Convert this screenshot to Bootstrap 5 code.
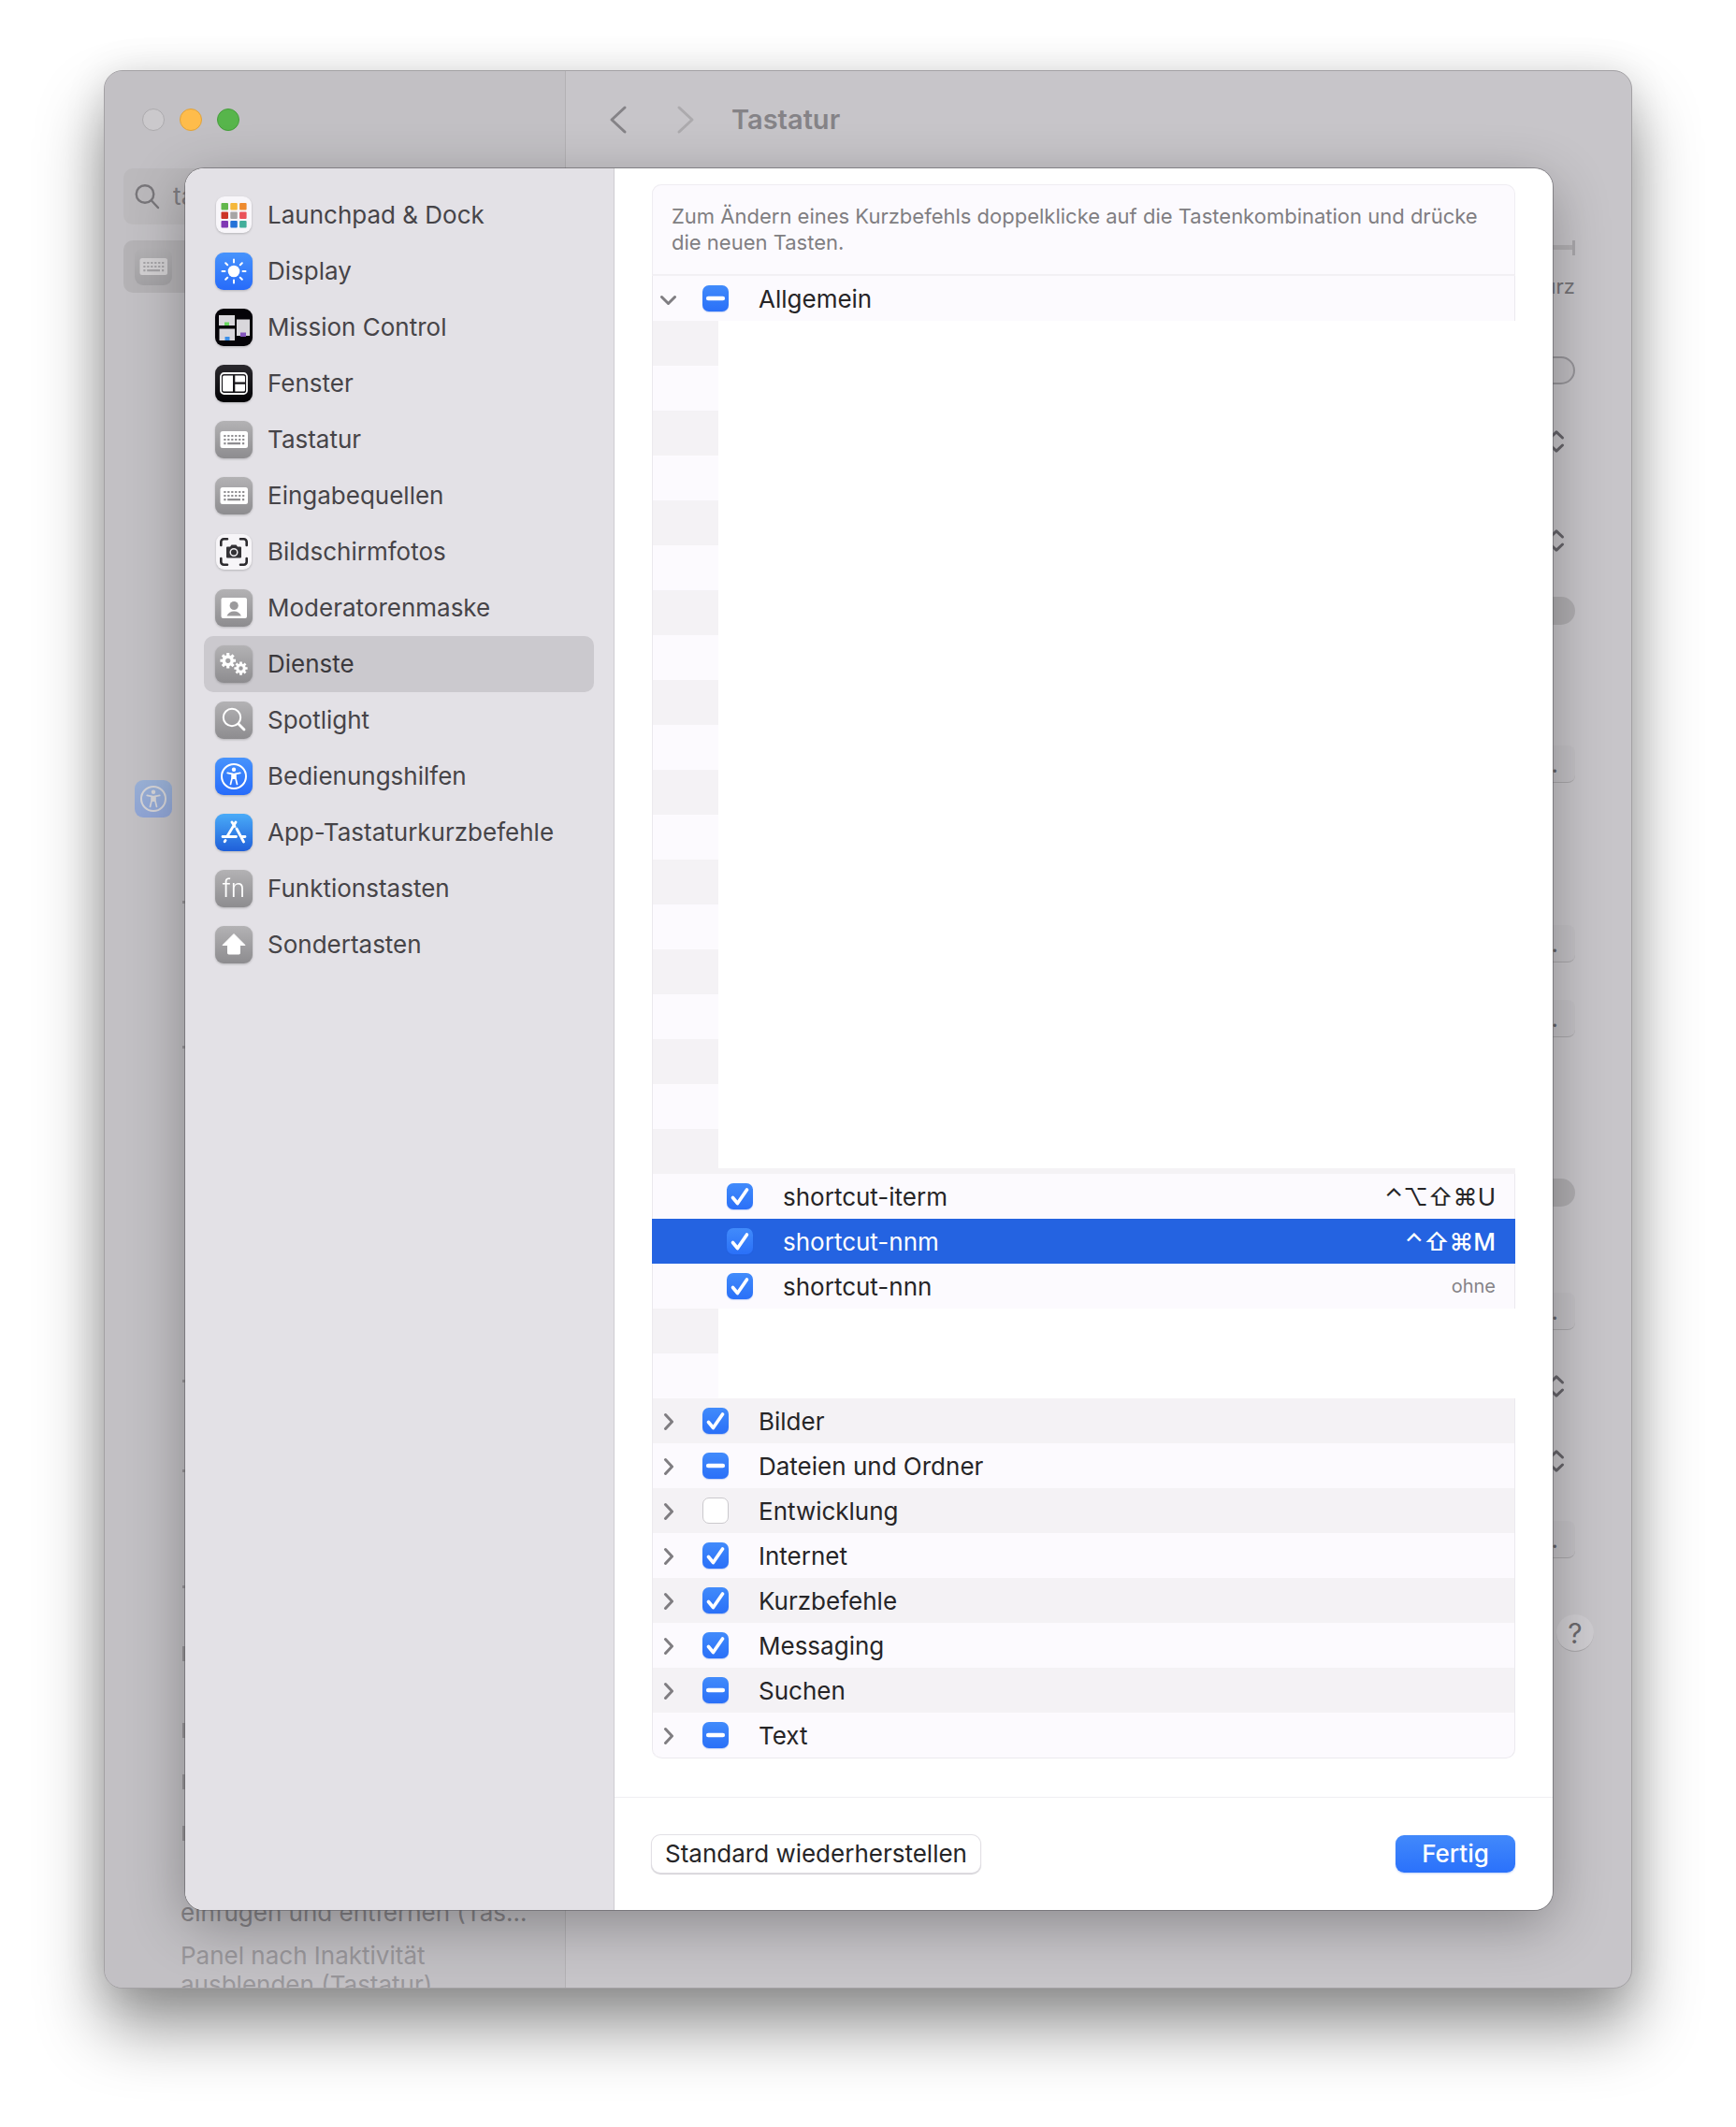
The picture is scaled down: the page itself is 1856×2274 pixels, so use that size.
<!DOCTYPE html>
<html lang="de">
<head>
<meta charset="utf-8">
<meta name="viewport" content="width=device-width, initial-scale=1">
<title>Tastatur – Kurzbefehle</title>
<link href="https://cdn.jsdelivr.net/npm/bootstrap@5.3.0/dist/css/bootstrap.min.css" rel="stylesheet">
<style>
  body { font-family: Inter, "Liberation Sans", sans-serif; font-size: 26px; line-height: 32px; color: #262527; background: #fff; }
  .desk { padding: 75px 111px 147px; }
  .win { display: grid; border-radius: 20px; border: 1px solid #a3a1a4; background: #c7c5c9;
    box-shadow: 0 42px 70px rgba(0,0,0,.42), 0 4px 44px rgba(0,0,0,.12); position: relative; }
  .win-back { position: absolute; inset: 0; overflow: hidden; border-radius: 19px; }
  .win-side { width: 493px; background: #c2c0c4; border-right: 1px solid #b3b1b4; flex: none; }
  .lights { height: 104px; padding-left: 40px; gap: 16px; }
  .light { width: 24px; height: 24px; border-radius: 50%; border: 1px solid #acaaad; background: #cbc9cc; padding: 0; }
  .light-y { background: #febc4b; border-color: #dfa23c; }
  .light-g { background: #57b54b; border-color: #469d3c; }
  .find { margin: 0 20px; height: 60px; padding-left: 12px; gap: 14px; background: #bbb9bc; border-radius: 10px; color: #858387; }
  .find input { border: 0; background: none; color: #7d7b7f; padding: 0; }
  .found { margin: 17px 20px 0; height: 56px; padding-left: 12px; background: #b4b2b5; border-radius: 10px; }
  .found-access { margin: 521px 32px 0; opacity: .32; }
  .edges { margin: 0 0 0 83px; display: grid; align-items: end; grid-template-rows: 92px 155px 357px 96px 124px 78px 82px 55px 55px; }
  .edges i { width: 3px; height: 16px; background: #9a989b; }
  .edges i.thin { height: 3px; }
  .hits { margin: auto 20px -12px 81px; color: #98969a; line-height: 31px; }
  .hits p { margin: 0 0 15px; }
  .hits .near { color: #858387; }
  .bar { height: 104px; padding-left: 45px; }
  .bar button { border: 0; background: none; padding: 0; width: 22px; height: 32px; margin-right: 50px; line-height: 0; }
  .bar button + button { margin-right: 38px; }
  .bar h1 { font-size: 29px; line-height: 36px; font-weight: 600; color: #858387; margin: 0; }
  .behind { display: grid; justify-items: end; align-items: end; padding-right: 60px;
    grid-template-rows: 105px 41px 90px 76px 106px 75px 164px 192px 80px 186px 127px 80px 80px 84px 100px; }
  .behind > * { height: 40px; display: flex; align-items: center; }
  .b-text { font-size: 22px; color: #757377; }
  .b-track { width: 120px; height: 16px; border-right: 3px solid #aaa8ac; background: linear-gradient(transparent 5px, #b2b0b3 5px, #b2b0b3 10px, transparent 10px); }
  .b-switch { width: 52px; height: 30px; border-radius: 15px; background: #b0aeb1; border: 0; }
  .b-switch.open { background: #c0bec2; border: 2px solid #97959a; }
  .b-btn { width: 120px; height: 40px; border-radius: 8px; border: 0; border-bottom: 1px solid #a9a7aa; background: #c3c1c5; color: #656367; padding: 0 18px 0 0; justify-content: flex-end; }
  .b-pick { margin-right: 11px; }
  .b-help { width: 40px; height: 40px; border-radius: 50%; border: 0; border-bottom: 1px solid #acaaad; background: #cfcdd1; color: #6b696d; padding: 0; justify-content: center; margin-right: -20px; font-size: 30px; }

  .sheet { margin: 104px 84px 83px 86px; border-radius: 20px; background: #fff; position: relative; overflow: hidden; }
  .sheet-shade { position: absolute; inset: 104px 84px 83px 86px; border-radius: 20px; box-shadow: 0 0 0 1px rgba(90,88,92,.55), 0 16px 60px rgba(0,0,0,.3); }
  .cats { width: 459px; flex: none; background: #e3e1e6; border-right: 1px solid #cfcdd2; padding: 20px 21px 20px 20px; }
  .cats a { height: 60px; padding: 0 12px; gap: 16px; color: #464448; text-decoration: none; border-radius: 10px; display: flex; align-items: center; }
  .cats a.on { background: #cbc9ce; color: #3b393d; }
  .ico { width: 40px; height: 40px; flex: none; display: block; filter: drop-shadow(0 1px 1px rgba(0,0,0,.2)); }
  .pane { padding-top: 17px; }
  .svcs { margin: 0 40px; border-left: 1px solid #ebe9ee; border-radius: 10px; }
  .hint { margin: 0 0 0 -1px; padding: 19px 20px 20px; border: 1px solid #efedf2; border-bottom: 2px solid #f2f0f4; border-radius: 10px 10px 0 0; background: #fcfafe; font-size: 22px; line-height: 28px; color: #807e82; }
  .svc { height: 48px; padding-left: 8px; padding-right: 20px; background: #fcfafe; border-right: 1px solid #ebe9ee; }
  .svc.alt { background: #f4f2f5; }
  .svc.sub { padding-left: 79px; }
  .svc.sel { background: #2463e1; color: #fff; border-color: #2463e1; margin-left: -1px; padding-left: 80px; }
  .svc.end { border-bottom: 1px solid #ebe9ee; border-radius: 0 0 10px 10px; height: 49px; }
  .svc label { margin-left: 32px; flex: 1; }
  .svc label, .svc span { padding-top: 2px; }
  .tw { width: 18px; height: 20px; margin-right: 27px; border: 0; background: none; padding: 0; line-height: 0; }
  .svc .form-check-input { width: 28px; height: 28px; margin: 0; flex: none; border: 1px solid #cbc9cd; border-radius: 7px; background-color: #fff; }
  .svc .form-check-input:checked, .svc .form-check-input:indeterminate { border: 0; background-color: #3079fa; background-size: 28px 28px; box-shadow: 0 1px 1px rgba(30,90,220,.25); }
  .svc .form-check-input:checked { background-image: url("data:image/svg+xml,%3csvg xmlns='http://www.w3.org/2000/svg' viewBox='0 0 28 28'%3e%3cpath d='M6.500 15.500l5 6L21.500 7' fill='none' stroke='%23fff' stroke-width='3.600' stroke-linecap='round' stroke-linejoin='round'/%3e%3c/svg%3e"), linear-gradient(#418bfb, #2a70f8); }
  .svc .form-check-input:indeterminate { background-image: url("data:image/svg+xml,%3csvg xmlns='http://www.w3.org/2000/svg' viewBox='0 0 28 28'%3e%3cpath d='M6.200 14h15.600' fill='none' stroke='%23fff' stroke-width='4.600' stroke-linecap='round'/%3e%3c/svg%3e"), linear-gradient(#418bfb, #2a70f8); }
  .svc .none { font-size: 20px; color: #858387; padding: 0; }
  .blank { background: #fff; }
  .blank div { width: 70px; background: repeating-linear-gradient(#f4f2f5 0 48px, #fcfafe 48px 96px); }
  .blank-long { height: 906px; }
  .blank-short { height: 96px; }
  .lip { height: 6px; background: #f4f2f5; }
  .foot { margin-top: 41px; border-top: 1px solid #f0eef2; padding: 40px; }
  .foot .btn { height: 40px; font-size: 26px; line-height: 38px; padding: 0 14px; border: 0; border-radius: 9px; }
  .foot .btn-plain { color: #262527; background: #fff; box-shadow: 0 0 0 1px #e2e0e5, 0 1px 1px 1px #d0ced3; }
  .foot .btn-go { color: #fff; background: linear-gradient(#4289fb, #2a71fb); width: 128px; box-shadow: 0 1px 2px rgba(40,100,230,.3); font-weight: 500; }
</style>
<script src="https://cdn.jsdelivr.net/npm/bootstrap@5.3.0/dist/js/bootstrap.bundle.min.js"></script>
</head>
<body>
<svg width="0" height="0" class="position-absolute" aria-hidden="true">
  <defs>
    <linearGradient id="gGrey" x1="0" y1="0" x2="0" y2="1"><stop offset="0" stop-color="#b3b2b4"/><stop offset="1" stop-color="#8d8c8f"/></linearGradient>
    <linearGradient id="gBlue" x1="0" y1="0" x2="0" y2="1"><stop offset="0" stop-color="#4793fc"/><stop offset="1" stop-color="#276bfa"/></linearGradient>
    <linearGradient id="gStore" x1="0" y1="0" x2="0" y2="1"><stop offset="0" stop-color="#4aabf8"/><stop offset="1" stop-color="#1f5fd9"/></linearGradient>
    <linearGradient id="gDark" x1="0" y1="0" x2="0" y2="1"><stop offset="0" stop-color="#2b292e"/><stop offset="1" stop-color="#020104"/></linearGradient>
    <symbol id="keys" viewBox="0 0 40 40">
      <rect width="40" height="40" rx="9" fill="url(#gGrey)"/>
      <rect x="5.500" y="11" width="29.500" height="18" rx="2.500" fill="#fff"/>
      <g stroke="#8f8e91" stroke-width="2.200"><path d="M9.300 16h22" stroke-dasharray="2.200 1.760"/><path d="M9.300 20h22" stroke-dasharray="2.200 1.760"/><path d="M9.300 24.200h2.200M13.200 24.200h13.800M29 24.200h2.200"/></g>
    </symbol>
    <symbol id="access" viewBox="0 0 40 40">
      <rect width="40" height="40" rx="9" fill="url(#gBlue)"/>
      <circle cx="20" cy="20" r="13" fill="none" stroke="#fff" stroke-width="2"/>
      <circle cx="20" cy="12.700" r="2.200" fill="#fff"/>
      <path d="M13.200 16.400l5 .9v4.200l-1.700 7M26.800 16.400l-5 .9v4.200l1.700 7" fill="none" stroke="#fff" stroke-width="1.700" stroke-linecap="round" stroke-linejoin="round"/>
      <path d="M17.600 16.800h4.800v6.200h-4.800z" fill="#fff"/>
    </symbol>
    <symbol id="gear" viewBox="-10 -10 20 20">
      <circle r="5" fill="none" stroke="#fff" stroke-width="4"/>
      <g stroke="#fff" stroke-width="3.600"><path d="M0-9.500V-6M0 9.500V6M-9.500 0H-6M9.500 0H6M-6.700-6.700l2.500 2.500M6.700 6.700L4.200 4.200M-6.700 6.700l2.500-2.500M6.700-6.700L4.200-4.200"/></g>
    </symbol>
    <symbol id="right" viewBox="0 0 18 20"><path d="M5.500 3.500l7 7.500-7 7.500" fill="none" stroke="#7f7d81" stroke-width="3" stroke-linecap="round" stroke-linejoin="round"/></symbol>
    <symbol id="updown" viewBox="0 0 18 26"><path d="M2.500 9L9 2.800 15.500 9M2.500 17L9 23.200 15.500 17" fill="none" stroke="#66646a" stroke-width="3" stroke-linecap="round" stroke-linejoin="round"/></symbol>
  </defs>
</svg>

<main class="desk">
  <div class="win">
    <div class="win-back d-flex">
      <aside class="win-side d-flex flex-column">
        <div class="lights d-flex align-items-center">
          <button class="light" aria-label="Schließen"></button><button class="light light-y" aria-label="Minimieren"></button><button class="light light-g" aria-label="Vergrößern"></button>
        </div>
        <div class="find d-flex align-items-center flex-shrink-0">
          <svg width="27" height="28" viewBox="0 0 27 28" class="flex-shrink-0" fill="none" stroke="#78767a" stroke-width="2.400" stroke-linecap="round"><circle cx="11" cy="11.500" r="9.300"/><path d="M18 18.500l7 7.500"/></svg>
          <input class="w-100" type="text" value="tas" aria-label="Suchen">
        </div>
        <div class="found d-flex align-items-center flex-shrink-0"><svg width="40" height="40" opacity=".4"><use href="#keys"/></svg></div>
        <div class="found-access"><svg width="40" height="40" class="d-block"><use href="#access"/></svg></div>
        <div class="edges" aria-hidden="true"><i class="thin"></i><i class="thin"></i><i class="thin"></i><i class="thin"></i><i class="thin"></i><i></i><i></i><i></i><i></i></div>
        <div class="hits text-nowrap"><p class="near">einfügen und entfernen (Tas…</p><div>Panel nach Inaktivität<br>ausblenden (Tastatur)</div></div>
      </aside>
      <section class="flex-grow-1">
        <div class="bar d-flex align-items-center">
          <button aria-label="Zurück"><svg width="22" height="32" viewBox="0 0 22 32"><path d="M18 3L4 16l14 13" fill="none" stroke="#858387" stroke-width="3" stroke-linecap="round" stroke-linejoin="round"/></svg></button>
          <button aria-label="Vorwärts"><svg width="22" height="32" viewBox="0 0 22 32"><path d="M4 3l14 13L4 29" fill="none" stroke="#acaaad" stroke-width="3" stroke-linecap="round" stroke-linejoin="round"/></svg></button>
          <h1>Tastatur</h1>
        </div>
        <div class="behind">
          <div><div class="b-track"></div></div>
          <div class="b-text">Kurz</div>
          <div><div class="b-switch open"></div></div>
          <div class="b-pick"><svg width="18" height="26"><use href="#updown"/></svg></div>
          <div class="b-pick"><svg width="18" height="26"><use href="#updown"/></svg></div>
          <div><div class="b-switch"></div></div>
          <button class="b-btn">…</button>
          <button class="b-btn">…</button>
          <button class="b-btn">…</button>
          <div><div class="b-switch"></div></div>
          <button class="b-btn">…</button>
          <div class="b-pick"><svg width="18" height="26"><use href="#updown"/></svg></div>
          <div class="b-pick"><svg width="18" height="26"><use href="#updown"/></svg></div>
          <button class="b-btn">…</button>
          <button class="b-help">?</button>
        </div>
      </section>
    </div>
    <div class="sheet-shade"></div>

    <div class="sheet d-flex" role="dialog" aria-label="Kurzbefehle">
      <nav class="cats">
        <a href="#"><svg class="ico" viewBox="0 0 40 40"><rect x="1" width="38" height="39" rx="9" fill="#f8f6fa"/>
          <g><rect x="6.500" y="7" width="7.500" height="7.500" rx="1" fill="#62b74c"/><rect x="16.300" y="7" width="7.500" height="7.500" rx="1" fill="#f5b73a"/><rect x="26.100" y="7" width="7.500" height="7.500" rx="1" fill="#ee8a2e"/><rect x="6.500" y="16.500" width="7.500" height="7.500" rx="1" fill="#cc3526"/><rect x="16.300" y="16.500" width="7.500" height="7.500" rx="1" fill="#a7a5a5"/><rect x="26.100" y="16.500" width="7.500" height="7.500" rx="1" fill="#ea5159"/><rect x="6.500" y="26" width="7.500" height="7.500" rx="1" fill="#8038b4"/><rect x="16.300" y="26" width="7.500" height="7.500" rx="1" fill="#2572d8"/><rect x="26.100" y="26" width="7.500" height="7.500" rx="1" fill="#43ae9b"/></g></svg>Launchpad &amp; Dock</a>
        <a href="#"><svg class="ico" viewBox="0 0 40 40"><rect width="40" height="40" rx="9" fill="url(#gBlue)"/><circle cx="20" cy="20" r="6.300" fill="#fff"/><path d="M20 7.500v3M20 29.500v3M7.500 20h3M29.500 20h3M11.200 11.200l2 2M26.800 26.800l2 2M11.200 28.800l2-2M26.800 13.200l2-2" stroke="#fff" stroke-width="2" stroke-linecap="round"/></svg>Display</a>
        <a href="#"><svg class="ico" viewBox="0 0 40 40"><rect width="40" height="40" rx="9" fill="#050308"/><path d="M4 7h17v11H4zM4.500 21.500H21V34H4.500zM23 11.500h14V29H23z" fill="#d9d7dc"/><path d="M10 14.500h5V18h-5z" fill="#67d65d"/><path d="M10.500 30h5v4h-5z" fill="#3c8fe8"/><path d="M27 25.500h6V30h-6z" fill="#8455bd"/></svg>Mission Control</a>
        <a href="#"><svg class="ico" viewBox="0 0 40 40"><rect width="40" height="40" rx="9" fill="url(#gDark)"/><rect x="6" y="9" width="28" height="22" rx="3.500" fill="none" stroke="#fff" stroke-width="1.800"/><path d="M9.500 11.500H19v17H9.500a1.500 1.500 0 0 1-1.500-1.500V13a1.500 1.500 0 0 1 1.500-1.500zM21.300 11.500h9.200A1.500 1.500 0 0 1 32 13v5.600H21.300zM21.300 20.800H32V27a1.500 1.500 0 0 1-1.500 1.500h-9.200z" fill="#fff"/></svg>Fenster</a>
        <a href="#"><svg class="ico"><use href="#keys"/></svg>Tastatur</a>
        <a href="#"><svg class="ico"><use href="#keys"/></svg>Eingabequellen</a>
        <a href="#"><svg class="ico" viewBox="0 0 40 40"><rect x="1" y="1" width="38" height="38" rx="9" fill="#f7f5f8"/><path d="M6.300 13V9.300a3 3 0 0 1 3-3H13M27 6.300h3.700a3 3 0 0 1 3 3V13M33.700 27v3.700a3 3 0 0 1-3 3H27M13 33.700H9.300a3 3 0 0 1-3-3V27" fill="none" stroke="#2c2a2e" stroke-width="2.600" stroke-linecap="round"/><path d="M13 14.500h3l1.500-2h5l1.500 2h3a1 1 0 0 1 1 1v10a1 1 0 0 1-1 1H13a1 1 0 0 1-1-1v-10a1 1 0 0 1 1-1z" fill="#333135"/><circle cx="20" cy="20.500" r="3.800" fill="#333135" stroke="#f0eef2" stroke-width="1.500"/></svg>Bildschirmfotos</a>
        <a href="#"><svg class="ico" viewBox="0 0 40 40"><rect width="40" height="40" rx="9" fill="url(#gGrey)"/><rect x="6.500" y="9" width="27.500" height="22" rx="2" fill="#fff"/><circle cx="20.200" cy="17.500" r="4.600" fill="#9b9a9c"/><path d="M12.500 28.500c1.500-3.600 4.300-5 7.700-5s6.200 1.400 7.700 5z" fill="#9b9a9c"/></svg>Moderatorenmaske</a>
        <a href="#" class="on"><svg class="ico" viewBox="0 0 40 40"><rect width="40" height="40" rx="9" fill="url(#gGrey)"/><use href="#gear" x="5" y="7.500" width="17.500" height="17.500"/><use href="#gear" x="20" y="17" width="15" height="15"/></svg>Dienste</a>
        <a href="#"><svg class="ico" viewBox="0 0 40 40"><rect width="40" height="40" rx="9" fill="url(#gGrey)"/><circle cx="18" cy="17" r="9.200" fill="none" stroke="#fff" stroke-width="2"/><path d="M25 24l6 6" stroke="#fff" stroke-width="2.800" stroke-linecap="round"/></svg>Spotlight</a>
        <a href="#"><svg class="ico"><use href="#access"/></svg>Bedienungshilfen</a>
        <a href="#"><svg class="ico" viewBox="0 0 40 40"><rect width="40" height="40" rx="9" fill="url(#gStore)"/><path d="M22 9l-9.300 15.500M18 9l3 4.500M8 24.500h14.500M27.500 24.500H32M23 16l7.500 14M11 28.500l-.8 1.300" stroke="#fff" stroke-width="2.800" stroke-linecap="round" fill="none"/></svg>App-Tastaturkurzbefehle</a>
        <a href="#"><svg class="ico" viewBox="0 0 40 40"><rect width="40" height="40" rx="9" fill="url(#gGrey)"/><text x="20" y="28.500" text-anchor="middle" font-size="26" font-weight="300" fill="#fff">fn</text></svg>Funktionstasten</a>
        <a href="#"><svg class="ico" viewBox="0 0 40 40"><rect width="40" height="40" rx="9" fill="url(#gGrey)"/><path d="M20 8.500L32 20.500H26.500V29a1 1 0 0 1-1 1h-11a1 1 0 0 1-1-1V20.500H8z" fill="#fff" stroke="#fff" stroke-linejoin="round"/></svg>Sondertasten</a>
      </nav>

      <section class="pane flex-grow-1">
        <div class="svcs">
          <p class="hint">Zum Ändern eines Kurzbefehls doppelklicke auf die Tastenkombination und drücke die neuen Tasten.</p>
          <div class="svc d-flex align-items-center"><button class="tw" aria-label="Zuklappen"><svg width="18" height="20" viewBox="0 0 18 20"><path d="M1.500 8.500l7 7 7-7" fill="none" stroke="#7f7d81" stroke-width="3" stroke-linecap="round" stroke-linejoin="round"/></svg></button><input class="form-check-input" type="checkbox" id="s1" data-mixed><label for="s1">Allgemein</label></div>
          <div class="blank blank-long d-flex"><div></div></div>
          <div class="lip"></div>
          <div class="svc sub d-flex align-items-center"><input class="form-check-input" type="checkbox" id="s2" checked><label for="s2">shortcut-iterm</label><span>⌃⌥⇧⌘U</span></div>
          <div class="svc sub sel d-flex align-items-center"><input class="form-check-input" type="checkbox" id="s3" checked><label for="s3">shortcut-nnm</label><span class="fw-medium">⌃⇧⌘M</span></div>
          <div class="svc sub d-flex align-items-center"><input class="form-check-input" type="checkbox" id="s4" checked><label for="s4">shortcut-nnn</label><span class="none">ohne</span></div>
          <div class="blank blank-short d-flex"><div></div></div>
          <div class="svc alt d-flex align-items-center"><button class="tw" aria-label="Aufklappen"><svg width="18" height="20"><use href="#right"/></svg></button><input class="form-check-input" type="checkbox" id="s5" checked><label for="s5">Bilder</label></div>
          <div class="svc d-flex align-items-center"><button class="tw" aria-label="Aufklappen"><svg width="18" height="20"><use href="#right"/></svg></button><input class="form-check-input" type="checkbox" id="s6" data-mixed><label for="s6">Dateien und Ordner</label></div>
          <div class="svc alt d-flex align-items-center"><button class="tw" aria-label="Aufklappen"><svg width="18" height="20"><use href="#right"/></svg></button><input class="form-check-input" type="checkbox" id="s7"><label for="s7">Entwicklung</label></div>
          <div class="svc d-flex align-items-center"><button class="tw" aria-label="Aufklappen"><svg width="18" height="20"><use href="#right"/></svg></button><input class="form-check-input" type="checkbox" id="s8" checked><label for="s8">Internet</label></div>
          <div class="svc alt d-flex align-items-center"><button class="tw" aria-label="Aufklappen"><svg width="18" height="20"><use href="#right"/></svg></button><input class="form-check-input" type="checkbox" id="s9" checked><label for="s9">Kurzbefehle</label></div>
          <div class="svc d-flex align-items-center"><button class="tw" aria-label="Aufklappen"><svg width="18" height="20"><use href="#right"/></svg></button><input class="form-check-input" type="checkbox" id="s10" checked><label for="s10">Messaging</label></div>
          <div class="svc alt d-flex align-items-center"><button class="tw" aria-label="Aufklappen"><svg width="18" height="20"><use href="#right"/></svg></button><input class="form-check-input" type="checkbox" id="s11" data-mixed><label for="s11">Suchen</label></div>
          <div class="svc end d-flex align-items-center"><button class="tw" aria-label="Aufklappen"><svg width="18" height="20"><use href="#right"/></svg></button><input class="form-check-input" type="checkbox" id="s12" data-mixed><label for="s12">Text</label></div>
        </div>
        <div class="foot d-flex justify-content-between">
          <button class="btn btn-plain">Standard wiederherstellen</button>
          <button class="btn btn-go">Fertig</button>
        </div>
      </section>
    </div>
  </div>
</main>
<script>
  document.querySelectorAll('[data-mixed]').forEach(function (box) { box.indeterminate = true; });
</script>
</body>
</html>
